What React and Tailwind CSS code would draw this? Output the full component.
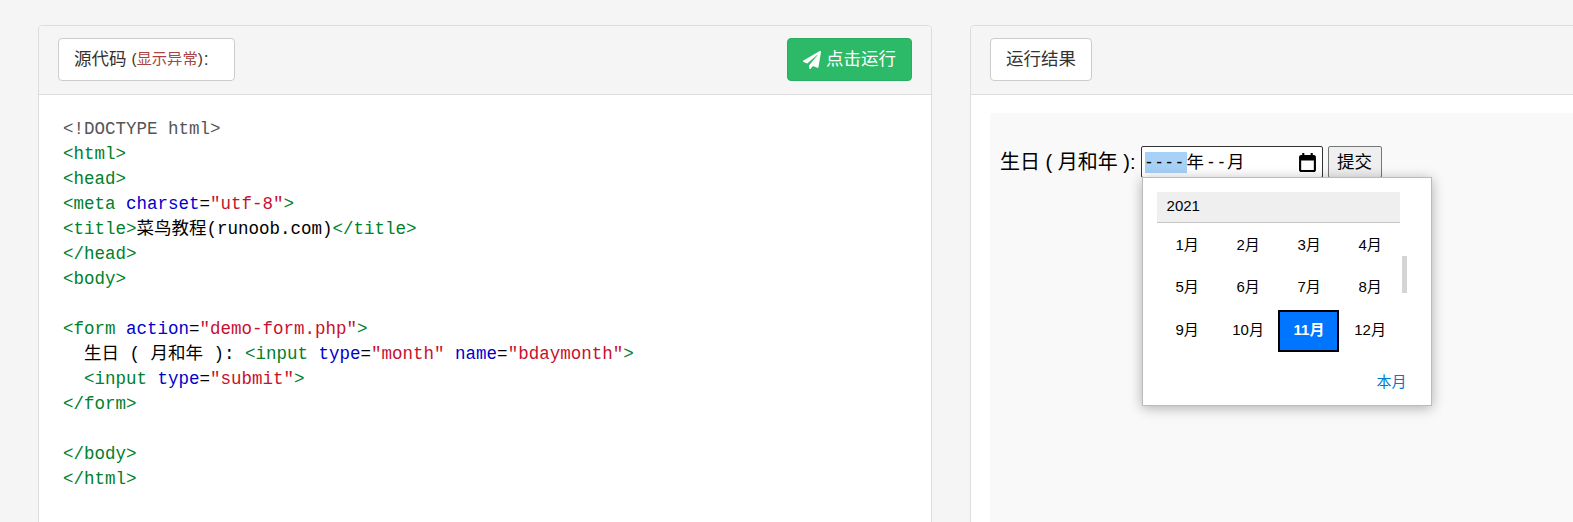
import { FaPaperPlane } from 'react-icons/fa';

const sans = 'font-["Liberation_Sans","Noto_Sans_CJK_SC",sans-serif]';

const T = ({ children }) => <span className="text-[#00802b]">{children}</span>;
const A = ({ children }) => <span className="text-[#0000cc]">{children}</span>;
const V = ({ children }) => <span className="text-[#c8102e]">{children}</span>;

const lines = [
    <span className="text-[#555555]">{'<!DOCTYPE html>'}</span>,
    <T>{'<html>'}</T>,
    <T>{'<head>'}</T>,
    <><T>{'<meta '}</T><A>charset</A>=<V>"utf-8"</V><T>{'>'}</T></>,
    <><T>{'<title>'}</T>菜鸟教程(runoob.com)<T>{'</title>'}</T></>,
    <T>{'</head>'}</T>,
    <T>{'<body>'}</T>,
    '',
    <><T>{'<form '}</T><A>action</A>=<V>"demo-form.php"</V><T>{'>'}</T></>,
    <>{'  生日 ( 月和年 ): '}<T>{'<input '}</T><A>type</A>=<V>"month"</V> <A>name</A>=<V>"bdaymonth"</V><T>{'>'}</T></>,
    <>{'  '}<T>{'<input '}</T><A>type</A>=<V>"submit"</V><T>{'>'}</T></>,
    <T>{'</form>'}</T>,
    '',
    <T>{'</body>'}</T>,
    <T>{'</html>'}</T>,
];

const months = ['1月', '2月', '3月', '4月', '5月', '6月', '7月', '8月', '9月', '10月', '11月', '12月'];

function MonthPicker() {
    return (
        <div className="absolute left-[1px] top-[31px] z-10 w-[290px] h-[229px] bg-white border border-[#bbbbbb] shadow-[0_2px_12px_rgba(0,0,0,0.3)] pl-[14px] pt-[14px] text-[15px] text-black">
            <div className="w-[243px] h-[31px] bg-[#efefef] border-b border-[#c4c4c4] pl-[10px] pb-[2px] flex items-center">2021</div>
            <div className="relative grid grid-cols-[repeat(4,61px)] grid-rows-[42px_43px_43px] w-[244px] mt-[1px]">
                {months.map((m) => (
                    <div key={m} className={m === '11月'
                        ? 'flex items-center justify-center bg-[#0075ff] border-2 border-black text-white font-bold -ml-[1px] mr-[1px] mt-[1px] pl-[2px] pb-[2px]'
                        : 'flex items-center justify-center'}>
                        {m}
                    </div>
                ))}
                <div className="absolute left-[245px] top-[32px] w-[5px] h-[37px] bg-[#d4d4d4]"></div>
            </div>
            <div className="flex justify-end pr-[24px] mt-[18px] leading-[24px] text-[#0078d4]">本月</div>
        </div>
    );
}

export default function App() {
    return (
        <div className={`${sans} h-[522px] w-[1573px] overflow-hidden bg-[#f5f5f5] flex gap-[38px] pl-[38px] pt-[25px]`}>
            {/* left panel */}
            <div className="w-[894px] shrink-0 h-[520px] border border-[#dddddd] rounded-t-[4px] bg-white">
                <div className="h-[69px] bg-[#f5f5f5] border-b border-[#dddddd] rounded-t-[4px] flex items-start justify-between px-[19px] pt-[12px]">
                    <div className="h-[43px] w-[177px] bg-white border border-[#cccccc] rounded-[4px] pl-[15px] flex items-center text-[17.5px] text-[#333333]">
                        源代码&nbsp;<span className="text-[15.3px]">(<span className="text-[#a94442]">显示异常</span>)</span><span className="ml-[1px]">:</span>
                    </div>
                    <div className="h-[43px] w-[125px] bg-[#2dba68] border border-[#27ae60] rounded-[4px] flex items-center justify-center gap-[5px] text-[17.5px] text-white">
                        <FaPaperPlane size={18} />
                        点击运行
                    </div>
                </div>
                <div className='pl-[24px] pt-[22px] font-["Liberation_Mono","Noto_Sans_CJK_SC",monospace] text-[17.5px] leading-[25px] text-black whitespace-pre'>
                    {lines.map((line, i) => (
                        <div key={i} className="h-[25px]">{line}</div>
                    ))}
                </div>
            </div>

            {/* right panel */}
            <div className="w-[894px] shrink-0 h-[520px] border border-[#dddddd] rounded-t-[4px] bg-white">
                <div className="h-[69px] bg-[#f5f5f5] border-b border-[#dddddd] rounded-t-[4px] flex items-start px-[19px] pt-[12px]">
                    <div className="h-[43px] w-[102px] bg-white border border-[#cccccc] rounded-[4px] flex items-center justify-center text-[17.5px] text-[#333333]">
                        运行结果
                    </div>
                </div>
                <div className="ml-[19px] mt-[18px] h-[420px] bg-[#f9f9f9] pl-[10px] pt-[33px] text-[20px] text-black">
                    <div className="flex items-start">
                        <span className="leading-[32px] mr-[5px]">生日 ( 月和年 ):</span>
                        <div className="relative">
                            <div className="w-[182px] h-[32px] border border-[#333333] rounded-[2px] bg-white flex items-center pl-[3px] text-[17.5px]">
                                <span className="bg-[#a8d1f8] tracking-[4.3px] pl-[1.5px] w-[42px] shrink-0 whitespace-nowrap h-[21px] leading-[21px]">----</span>
                                <span>年</span>
                                <span className="tracking-[4.7px] ml-[4px]">--</span>
                                <span className="-ml-[2px]">月</span>
                                <svg className="ml-auto mr-[5px]" width="19" height="19" viewBox="0 0 18 18" fill="black">
                                    <path d="M15 2h-1V0h-2v2H6V0H4v2H3c-1.1 0-2 .9-2 2v12c0 1.1.9 2 2 2h12c1.1 0 2-.9 2-2V4c0-1.1-.9-2-2-2zm0 14H3V7h12v9z" />
                                </svg>
                            </div>
                            <MonthPicker />
                        </div>
                        <div className="ml-[5px] h-[32px] w-[54px] border border-[#767676] rounded-[2px] bg-[#efefef] flex items-center justify-center text-[17.5px]">提交</div>
                    </div>
                </div>
            </div>
        </div>
    );
}
